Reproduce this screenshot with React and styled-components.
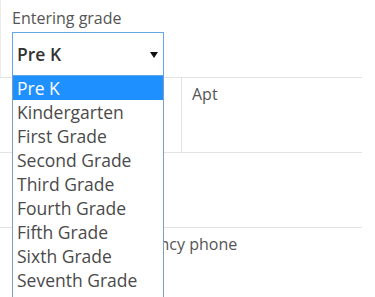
import React from 'react';
import styled, { createGlobalStyle } from 'styled-components';

const GlobalStyle = createGlobalStyle`
  html, body {
    margin: 0;
    padding: 0;
    background: #ffffff;
  }
  body {
    font-family: "Open Sans", "Liberation Sans", sans-serif;
    overflow: hidden;
  }
`;

const Form = styled.div`
  width: 362px;
`;

const Row = styled.div`
  display: flex;
  border-bottom: 1px solid #e3e3e3;
  height: ${props => props.$height}px;
`;

const Cell = styled.div`
  position: relative;
  box-sizing: border-box;
  flex: ${props => (props.$width ? `0 0 ${props.$width}px` : '1 1 auto')};
  padding: ${props => props.$top}px 10px 0 ${props => props.$left}px;
  border-left: ${props => (props.$leftLine ? '1px solid #ececec' : 'none')};
  border-right: ${props => (props.$rightLine ? '1px solid #e3e3e3' : 'none')};
`;

const Label = styled.div`
  font-size: 16px;
  line-height: 22px;
  color: #555555;
  white-space: nowrap;
`;

const SelectWrap = styled.div`
  position: relative;
  margin-top: 3px;
  width: 152px;
`;

const SelectBox = styled.div`
  box-sizing: border-box;
  height: 44px;
  display: flex;
  align-items: center;
  justify-content: space-between;
  padding: 0 5px 0 4px;
  border: 1px solid #62a6e8;
  background: #ffffff;
  font-size: 17.5px;
  font-weight: 600;
  color: #333333;
`;

const Arrow = styled.svg`
  width: 8px;
  height: 6px;
  margin-top: 1px;
`;

const Dropdown = styled.ul`
  position: absolute;
  top: 100%;
  left: 0;
  z-index: 10;
  box-sizing: border-box;
  width: 152px;
  margin: 0;
  padding: 0;
  list-style: none;
  background: #ffffff;
  border: 1px solid #7f9dbd;
  border-top: none;
`;

const Option = styled.li`
  height: 24px;
  line-height: 24px;
  padding: 0 4px;
  font-size: 17.5px;
  white-space: nowrap;
  color: ${props => (props.$active ? '#ffffff' : '#4a4a4a')};
  background: ${props => (props.$active ? '#1e90ff' : 'transparent')};
`;

const grades = [
  'Pre K',
  'Kindergarten',
  'First Grade',
  'Second Grade',
  'Third Grade',
  'Fourth Grade',
  'Fifth Grade',
  'Sixth Grade',
  'Seventh Grade',
  'Eighth Grade',
];

const App = () => {
  const selected = 'Pre K';

  return (
    <>
      <GlobalStyle />
      <Form>
        <Row $height={77}>
          <Cell $top={7} $left={11} $leftLine>
            <Label>Entering grade</Label>
            <SelectWrap>
              <SelectBox>
                {selected}
                <Arrow viewBox="0 0 8 6">
                  <path d="M0 0 L8 0 L4 6 Z" fill="#111" />
                </Arrow>
              </SelectBox>
              <Dropdown>
                {grades.map(g => (
                  <Option key={g} $active={g === selected}>{g}</Option>
                ))}
              </Dropdown>
            </SelectWrap>
          </Cell>
        </Row>
        <Row $height={74}>
          <Cell $top={5} $left={12} $width={182} $rightLine>
            <Label>Street address</Label>
          </Cell>
          <Cell $top={5} $left={10}>
            <Label>Apt</Label>
          </Cell>
        </Row>
        <Row $height={74}>
          <Cell $top={5} $left={12}>
            <Label>City</Label>
          </Cell>
        </Row>
        <Row $height={74}>
          <Cell $top={5} $left={12}>
            <Label>Non-parent emergency phone</Label>
          </Cell>
        </Row>
      </Form>
    </>
  );
};

export default App;
